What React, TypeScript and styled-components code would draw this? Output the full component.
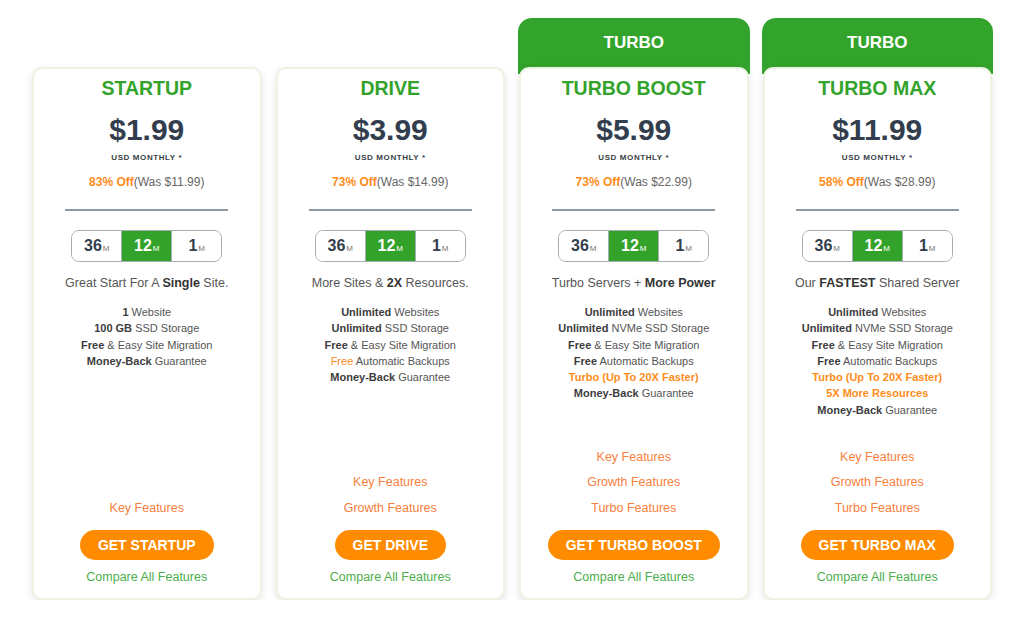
import React from "react";
import styled, { createGlobalStyle } from "styled-components";

const Global = createGlobalStyle`
  html, body { margin: 0; padding: 0; background: #fff; }
  body { font-family: "Liberation Sans", Arial, sans-serif; }
`;

const Row = styled.div`
  display: grid;
  grid-template-columns: repeat(4, 229.5px);
  column-gap: 14px;
  padding: 18px 0 0 32px;
  align-items: end;
`;

const Column = styled.div`
  display: flex;
  flex-direction: column;
`;

const TurboHeader = styled.div`
  height: 56px;
  margin: 0 -1px;
  padding-bottom: 7px;
  box-sizing: border-box;
  background: #33a42b;
  border-radius: 14px 14px 0 0;
  color: #fff;
  font-weight: bold;
  font-size: 17px;
  display: flex;
  align-items: center;
  justify-content: center;
`;

const Card = styled.div<{ $turbo?: boolean }>`
  position: relative;
  margin-top: ${(p) => (p.$turbo ? "-7px" : "0")};
  height: 533px;
  box-sizing: border-box;
  background: #fff;
  border: 2px solid #ebf4e3;
  border-radius: 10px;
  box-shadow: 0 3px 9px rgba(0, 0, 0, 0.1);
  display: flex;
  flex-direction: column;
  align-items: center;
  padding: 8px 0 13px;
  text-align: center;
`;

const Title = styled.div`
  font-size: 19.5px;
  line-height: 22px;
  font-weight: bold;
  color: #33a32b;
`;

const Price = styled.div`
  margin-top: 13px;
  font-size: 30px;
  line-height: 36px;
  font-weight: bold;
  color: #323e4d;
`;

const Period = styled.div`
  margin-top: 4px;
  font-size: 8px;
  line-height: 12px;
  letter-spacing: 0.6px;
  font-weight: bold;
  color: #3a3f47;
`;

const Discount = styled.div`
  margin-top: 10px;
  font-size: 12px;
  line-height: 16px;
  color: #666;
`;

const Percent = styled.span`
  color: #ff8c1a;
  font-weight: bold;
`;

const Divider = styled.div`
  margin-top: 19px;
  width: 163px;
  height: 2px;
  background: #8f99a3;
`;

const Toggle = styled.div`
  margin-top: 19px;
  width: 151px;
  height: 32px;
  box-sizing: border-box;
  border: 1px solid #a5adb5;
  border-radius: 8px;
  overflow: hidden;
  display: flex;
`;

const Segment = styled.div<{ $active?: boolean }>`
  flex: 1;
  display: flex;
  align-items: baseline;
  justify-content: center;
  padding-top: 6px;
  box-sizing: border-box;
  background: ${(p) => (p.$active ? "#33a22a" : "#fff")};
  color: ${(p) => (p.$active ? "#fff" : "#323e4d")};
  & + & {
    border-left: 1px solid #a5adb5;
  }
`;

const SegNum = styled.span`
  font-size: 16px;
  font-weight: bold;
`;

const SegUnit = styled.span<{ $active?: boolean }>`
  font-size: 8px;
  margin-left: 1px;
  color: ${(p) => (p.$active ? "#fff" : "#777")};
`;

const Tagline = styled.div`
  margin-top: 13px;
  font-size: 12.5px;
  line-height: 16px;
  color: #555;
  b {
    color: #333;
  }
`;

const Features = styled.ul`
  margin: 13px 0 0;
  padding: 0;
  list-style: none;
  font-size: 11px;
  line-height: 16.3px;
  color: #555;
`;

const Feature = styled.li<{ $highlight?: boolean }>`
  color: ${(p) => (p.$highlight ? "#ff8c1a" : "#555")};
  font-weight: ${(p) => (p.$highlight ? "bold" : "normal")};
  b {
    color: #3d3d3d;
  }
`;

const Orange = styled.span`
  color: #ff8c1a;
`;

const Spacer = styled.div`
  flex: 1;
`;

const Links = styled.div`
  display: flex;
  flex-direction: column;
  align-items: center;
`;

const FeatureLink = styled.a`
  font-size: 12.5px;
  line-height: 25.5px;
  color: #f7803d;
  text-decoration: none;
`;

const BuyButton = styled.button`
  margin-top: 9px;
  height: 30px;
  padding: 0 18px;
  border: none;
  border-radius: 15px;
  background: #ff8c00;
  color: #fff;
  font-family: "Liberation Sans", Arial, sans-serif;
  font-size: 14px;
  font-weight: bold;
  cursor: pointer;
`;

const Compare = styled.a`
  margin-top: 9px;
  font-size: 12.5px;
  line-height: 16px;
  color: #4cae4c;
  text-decoration: none;
`;

type Part = string | { b: string } | { o: string };
type Line = { parts: Part[]; highlight?: boolean };

type Plan = {
  name: string;
  price: string;
  off: string;
  was: string;
  tagline: React.ReactNode;
  features: Line[];
  links: string[];
  button: string;
  turbo?: boolean;
};

const plans: Plan[] = [
  {
    name: "STARTUP",
    price: "$1.99",
    off: "83% Off",
    was: "(Was $11.99)",
    tagline: (
      <>
        Great Start For A <b>Single</b> Site.
      </>
    ),
    features: [
      { parts: [{ b: "1" }, " Website"] },
      { parts: [{ b: "100 GB" }, " SSD Storage"] },
      { parts: [{ b: "Free" }, " & Easy Site Migration"] },
      { parts: [{ b: "Money-Back" }, " Guarantee"] },
    ],
    links: ["Key Features"],
    button: "GET STARTUP",
  },
  {
    name: "DRIVE",
    price: "$3.99",
    off: "73% Off",
    was: "(Was $14.99)",
    tagline: (
      <>
        More Sites &amp; <b>2X</b> Resources.
      </>
    ),
    features: [
      { parts: [{ b: "Unlimited" }, " Websites"] },
      { parts: [{ b: "Unlimited" }, " SSD Storage"] },
      { parts: [{ b: "Free" }, " & Easy Site Migration"] },
      { parts: [{ o: "Free" }, " Automatic Backups"] },
      { parts: [{ b: "Money-Back" }, " Guarantee"] },
    ],
    links: ["Key Features", "Growth Features"],
    button: "GET DRIVE",
  },
  {
    name: "TURBO BOOST",
    price: "$5.99",
    off: "73% Off",
    was: "(Was $22.99)",
    tagline: (
      <>
        Turbo Servers + <b>More Power</b>
      </>
    ),
    features: [
      { parts: [{ b: "Unlimited" }, " Websites"] },
      { parts: [{ b: "Unlimited" }, " NVMe SSD Storage"] },
      { parts: [{ b: "Free" }, " & Easy Site Migration"] },
      { parts: [{ b: "Free" }, " Automatic Backups"] },
      { parts: ["Turbo (Up To 20X Faster)"], highlight: true },
      { parts: [{ b: "Money-Back" }, " Guarantee"] },
    ],
    links: ["Key Features", "Growth Features", "Turbo Features"],
    button: "GET TURBO BOOST",
    turbo: true,
  },
  {
    name: "TURBO MAX",
    price: "$11.99",
    off: "58% Off",
    was: "(Was $28.99)",
    tagline: (
      <>
        Our <b>FASTEST</b> Shared Server
      </>
    ),
    features: [
      { parts: [{ b: "Unlimited" }, " Websites"] },
      { parts: [{ b: "Unlimited" }, " NVMe SSD Storage"] },
      { parts: [{ b: "Free" }, " & Easy Site Migration"] },
      { parts: [{ b: "Free" }, " Automatic Backups"] },
      { parts: ["Turbo (Up To 20X Faster)"], highlight: true },
      { parts: ["5X More Resources"], highlight: true },
      { parts: [{ b: "Money-Back" }, " Guarantee"] },
    ],
    links: ["Key Features", "Growth Features", "Turbo Features"],
    button: "GET TURBO MAX",
    turbo: true,
  },
];

const renderPart = (p: Part, i: number) => {
  if (typeof p === "string") return <React.Fragment key={i}>{p}</React.Fragment>;
  if ("b" in p) return <b key={i}>{p.b}</b>;
  return <Orange key={i}>{p.o}</Orange>;
};

const terms = ["36", "12", "1"];

const PlanCard: React.FC<{ plan: Plan }> = ({ plan }) => (
  <Column>
    {plan.turbo && <TurboHeader>TURBO</TurboHeader>}
    <Card $turbo={plan.turbo}>
      <Title>{plan.name}</Title>
      <Price>{plan.price}</Price>
      <Period>USD MONTHLY *</Period>
      <Discount>
        <Percent>{plan.off}</Percent>
        {plan.was}
      </Discount>
      <Divider />
      <Toggle>
        {terms.map((t) => (
          <Segment key={t} $active={t === "12"}>
            <SegNum>{t}</SegNum>
            <SegUnit $active={t === "12"}>M</SegUnit>
          </Segment>
        ))}
      </Toggle>
      <Tagline>{plan.tagline}</Tagline>
      <Features>
        {plan.features.map((f, i) => (
          <Feature key={i} $highlight={f.highlight}>
            {f.parts.map(renderPart)}
          </Feature>
        ))}
      </Features>
      <Spacer />
      <Links>
        {plan.links.map((l) => (
          <FeatureLink key={l} href="#">
            {l}
          </FeatureLink>
        ))}
      </Links>
      <BuyButton>{plan.button}</BuyButton>
      <Compare href="#">Compare All Features</Compare>
    </Card>
  </Column>
);

export default function App() {
  return (
    <>
      <Global />
      <Row>
        {plans.map((p) => (
          <PlanCard key={p.name} plan={p} />
        ))}
      </Row>
    </>
  );
}
